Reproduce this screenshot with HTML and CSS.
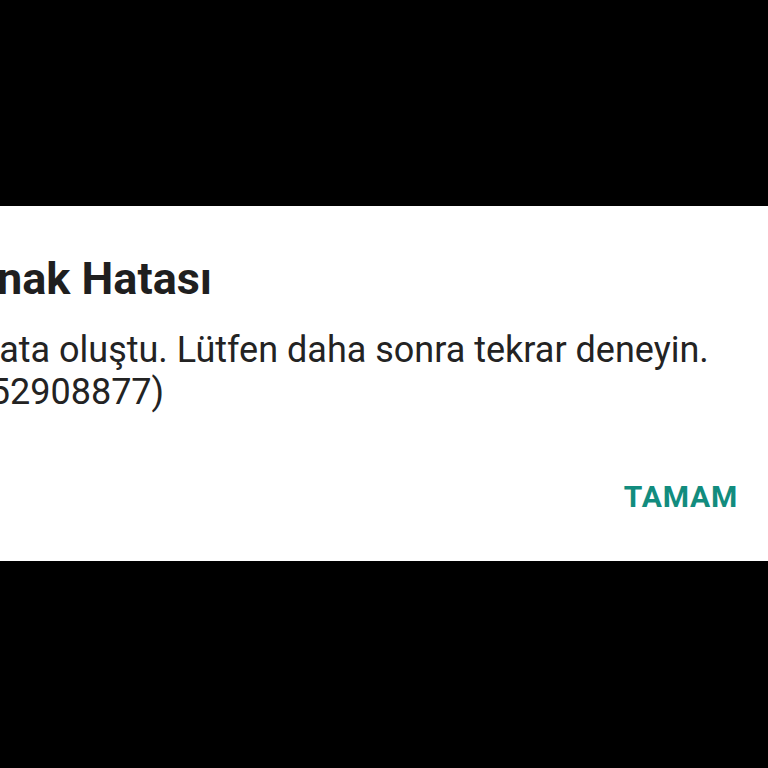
FILE: index.html
```html
<!DOCTYPE html>
<html lang="tr">
<head>
<meta charset="utf-8">
<link rel="stylesheet" href="styles.css">
</head>
<body>
<div class="dialog">
  <h1 class="title">Kaynak Hatası</h1>
  <p class="message">Bir hata oluştu. Lütfen daha sonra tekrar deneyin.<br>(-1152908877)</p>
  <div class="actions"><span class="btn">TAMAM</span></div>
</div>
</body>
</html>
```
FILE: styles.css
```css
html, body {
  margin: 0;
  padding: 0;
  background: #000;
  height: 768px;
  overflow: hidden;
}
.dialog {
  margin-top: 206px;
  margin-left: -73px;
  height: 355px;
  box-sizing: border-box;
  background: #fff;
  padding: 45px 30px 46px 0;
  font-family: Roboto, "Noto Sans", sans-serif;
  display: flex;
  flex-direction: column;
}
.title {
  margin: 0 0 0 -5px;
  font-size: 45px;
  line-height: 56px;
  font-weight: 700;
  color: #1f1f1f;
  white-space: nowrap;
}
.message {
  margin: 22px 0 0;
  font-size: 36px;
  line-height: 42px;
  font-weight: 400;
  color: #232323;
  white-space: nowrap;
}
.actions {
  margin-top: auto;
  display: flex;
  justify-content: flex-end;
}
.btn {
  font-size: 30px;
  line-height: 36px;
  font-weight: 700;
  color: #128c7e;
  letter-spacing: 0.8px;
}
```
